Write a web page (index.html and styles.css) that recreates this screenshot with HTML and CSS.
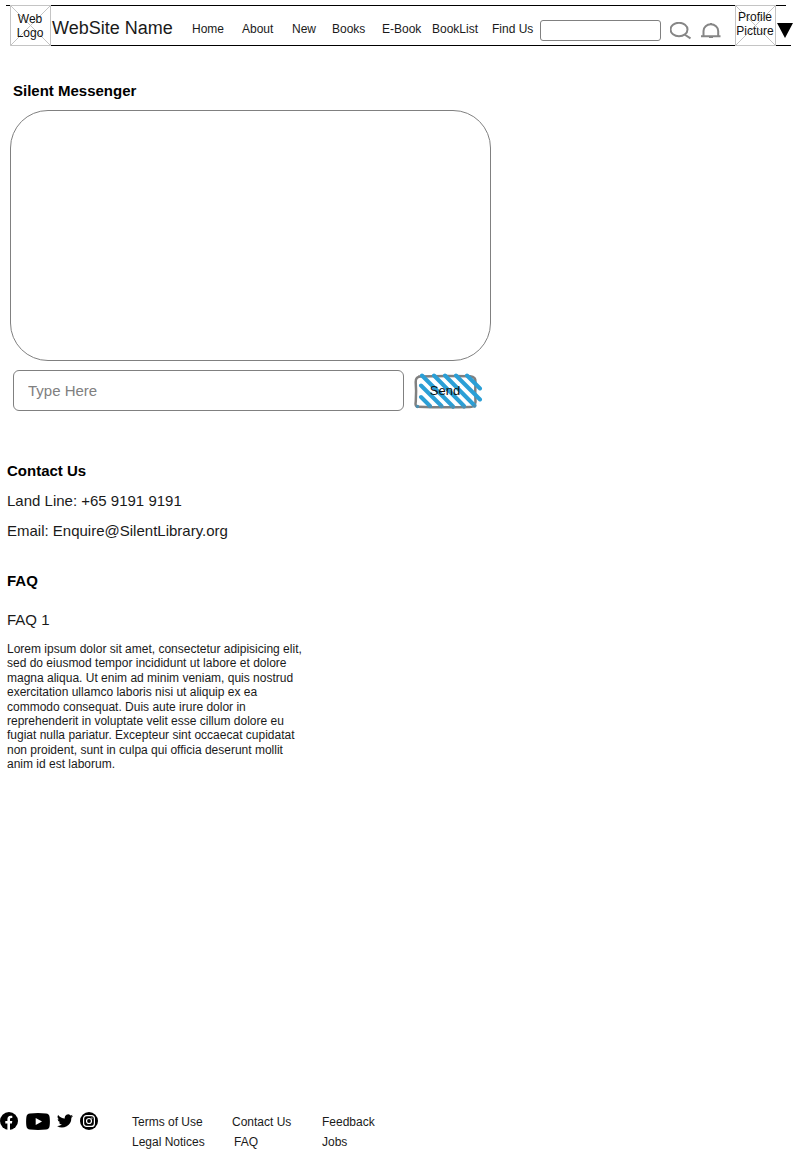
FILE: index.html
```html
<!DOCTYPE html>
<html lang="en">
<head>
<meta charset="utf-8">
<title>Silent Messenger</title>
<link rel="stylesheet" href="styles.css">
</head>
<body>
<header class="header">
  <div class="placeholder logo">
    <svg class="cross" viewBox="0 0 41 41"><path d="M.5.5h40v40H.5zL40.5 40.5M40.5.5L.5 40.5"/></svg>
    <span class="placeholder-text">Web<br>Logo</span>
  </div>
  <div class="brand">WebSite Name</div>
  <nav class="nav"><a>Home</a><a>About</a><a>New</a><a>Books</a><a>E-Book</a><a>BookList</a><a>Find Us</a></nav>
  <input class="search" aria-label="Search">
  <svg class="icon search-icon" viewBox="0 0 22 18"><ellipse cx="9" cy="7.500" rx="8.500" ry="6.700"/><path d="M14.500 12.500L20.500 16.300"/></svg>
  <svg class="icon bell-icon" viewBox="0 0 20 18"><path d="M2.500 14V9C2.500 5 5.800 2.300 9.800 2.300S17.200 5 17.200 9v5M0 14.200h19.500"/><path class="bell-detail" d="M8 15.500h4M9 1.500h2"/></svg>
  <div class="placeholder profile">
    <svg class="cross" viewBox="0 0 41 41"><path d="M.5.5h40v40H.5zL40.5 40.5M40.5.5L.5 40.5"/></svg>
    <span class="placeholder-text">Profile<br>Picture</span>
  </div>
  <svg class="caret" viewBox="0 0 16 15"><path d="M0 0h16L8 15z"/></svg>
</header>
<main class="main">
  <h1 class="title chat-title">Silent Messenger</h1>
  <section class="chat"></section>
  <form class="compose">
    <input class="message" placeholder="Type Here" aria-label="Message">
    <button class="send" type="button">
      <svg class="sketch" viewBox="0 0 70 38">
        <path class="outline" d="M5 3.500Q30 2.600 56 3.300Q62 4 61.500 9Q61 19 61.500 29Q61 34 56 34Q30 34.800 4 33.800Q.8 34 1.800 28Q2.500 18 1.700 9Q1.500 3.500 7 3.400"/>
        <path class="hatch" d="M7 24l9 9M7 12.500l20.500 20.500M8 2.500l31 31M20 2.500L50 33M31 2.500L60.500 32.500M42 2.500L66 26.500M53 2.500L66 15.500"/>
        <path class="marks" d="M3.500 33.500h0M16 33.500h0M27.500 33.500h0M39 34h0M50 34h0M60.500 33h0"/>
      </svg>
      <span class="send-text">Send</span>
    </button>
  </form>
  <section class="contact">
    <h2 class="title">Contact Us</h2>
    <p class="line">Land Line: +65 9191 9191</p>
    <p class="line">Email: Enquire@SilentLibrary.org</p>
  </section>
  <section class="faq">
    <h2 class="title">FAQ</h2>
    <h3 class="question">FAQ 1</h3>
    <p class="answer">Lorem ipsum dolor sit amet, consectetur adipisicing elit,<br>sed do eiusmod tempor incididunt ut labore et dolore<br>magna aliqua. Ut enim ad minim veniam, quis nostrud<br>exercitation ullamco laboris nisi ut aliquip ex ea<br>commodo consequat. Duis aute irure dolor in<br>reprehenderit in voluptate velit esse cillum dolore eu<br>fugiat nulla pariatur. Excepteur sint occaecat cupidatat<br>non proident, sunt in culpa qui officia deserunt mollit<br>anim id est laborum.</p>
  </section>
</main>
<footer class="footer">
  <div class="social">
    <svg class="facebook" viewBox="0 0 18 18"><circle cx="9" cy="9" r="9"/><path fill="#fff" d="M7.400 18v-6.400H5.300V9h2.100V7.200C7.400 5 8.600 3.800 10.600 3.800c.9 0 1.700.1 1.700.1v2h-1c-1 0-1.300.6-1.300 1.300V9h2.300l-.4 2.600H10V18z"/></svg>
    <svg class="youtube" viewBox="0 0 24 17"><path d="M4 .4Q12-.3 20 .4Q23.200.6 23.600 4Q24.200 8.500 23.600 13Q23.200 16.300 20 16.600Q12 17.300 4 16.600Q.8 16.300.4 13Q-.2 8.500.4 4Q.8.600 4 .4z"/><path fill="#fff" d="M9.700 5l6.300 3.500L9.700 12z"/></svg>
    <svg class="twitter" viewBox="0 0 24 20"><path d="M24 2.400a10 10 0 0 1-2.800.8A5 5 0 0 0 23.300.5a10 10 0 0 1-3.100 1.200A4.900 4.900 0 0 0 11.800 6.200 14 14 0 0 1 1.700 1a4.900 4.900 0 0 0 1.500 6.600A5 5 0 0 1 1 7v.1a4.900 4.900 0 0 0 3.900 4.800 5 5 0 0 1-2.200.1 4.900 4.900 0 0 0 4.600 3.400A9.900 9.900 0 0 1 0 17.500a14 14 0 0 0 21.500-12.400A10 10 0 0 0 24 2.400z"/></svg>
    <svg class="instagram" viewBox="0 0 18 18"><circle cx="9" cy="9" r="9"/><g fill="none" stroke="#fff" stroke-width="1.200"><rect x="3.600" y="3.600" width="10.800" height="10.800" rx="3"/><circle cx="9" cy="9" r="2.500"/></g><circle cx="11.900" cy="6.100" r=".7" fill="#fff"/></svg>
  </div>
  <div class="links"><a>Terms of Use</a><a>Contact Us</a><a>Feedback</a><a>Legal Notices</a><a class="faq-link">FAQ</a><a>Jobs</a></div>
</footer>
</body>
</html>
```
FILE: styles.css
```css
* { box-sizing: border-box; }
body {
  margin: 0;
  min-height: 1155px;
  padding-top: 5px;
  display: flex;
  flex-direction: column;
  background: #fff;
  color: #1a1a1a;
  font: 12px/14px "Liberation Sans", Arial, sans-serif;
}
svg { display: block; }
h1, h2, h3, p { margin: 0; }
.header {
  height: 41px;
  padding-left: 10px;
  display: flex;
  align-items: flex-start;
  background:
    linear-gradient(#000, #000) 6px 0 / 780px 1px no-repeat,
    linear-gradient(#000, #000) 10px 40px / 781px 1px no-repeat;
}
.placeholder { position: relative; flex: none; width: 41px; height: 41px; text-align: center; background: #fff; }
.cross { position: absolute; inset: 0; width: 41px; height: 41px; fill: none; stroke: #c4c4c4; }
.placeholder-text { position: relative; display: block; width: 40px; color: #111; white-space: nowrap; }
.logo .placeholder-text { padding-top: 7px; }
.profile .placeholder-text { padding-top: 5px; }
.brand { width: 141px; padding: 13px 0 0 1px; font-size: 18px; line-height: 21px; white-space: nowrap; }
.nav { display: grid; grid-template-columns: 50px 50px 40px 50px 50px 60px 48px; padding-top: 17px; white-space: nowrap; }
.search { width: 121px; height: 21px; margin-top: 15px; padding: 0 4px; border: 1px solid #808080; border-radius: 3px; background: #fff; }
.icon { flex: none; fill: none; stroke: #868686; stroke-width: 2; }
.search-icon { width: 22px; height: 18px; margin: 17px 0 0 9px; }
.bell-icon { width: 20px; height: 18px; margin: 17px 14px 0 9px; }
.bell-detail { stroke-width: 1; }
.caret { flex: none; width: 16px; height: 15px; margin: 18px 0 0 1px; }
.main { flex: 1; padding: 36px 0 0 7px; }
.title { font-size: 15px; line-height: 18px; color: #000; }
.chat-title { padding-left: 6px; }
.chat { width: 481px; height: 251px; margin: 10px 0 0 3px; border: 1px solid #808080; border-radius: 38px; }
.compose { display: flex; gap: 10px; margin: 9px 0 0 6px; }
.message { width: 391px; height: 41px; padding: 0 14px; border: 1px solid #808080; border-radius: 6px; font: 15px "Liberation Sans", Arial, sans-serif; }
.message::placeholder { color: #808080; opacity: 1; }
.send { position: relative; width: 70px; height: 38px; margin-top: 3px; padding: 0 8px 2px 0; border: 0; background: none; color: #111; font: 13px/14px "Liberation Sans", Arial, sans-serif; }
.sketch { position: absolute; inset: 0; width: 70px; height: 38px; fill: none; stroke-linecap: round; }
.hatch { stroke: #2b9fd6; stroke-width: 4; }
.outline { stroke: #808080; stroke-width: 2.5; }
.marks { stroke: #4d8fb0; stroke-width: 3.5; }
.send-text { position: relative; }
.contact { padding-top: 51px; }
.line { margin-top: 12px; font-size: 15px; line-height: 18px; }
.faq { padding-top: 32px; }
.question { margin-top: 21px; font-size: 15px; line-height: 18px; font-weight: 400; }
.answer { margin-top: 13px; line-height: 14.4px; white-space: nowrap; }
.footer { display: flex; height: 45px; }
.social { display: flex; width: 132px; padding-top: 2px; }
.facebook, .instagram { width: 18px; height: 18px; }
.youtube { width: 24px; height: 17px; margin: 1px 7px 0 8px; }
.twitter { width: 16px; height: 14px; margin: 2px 7px 0 0; }
.links { display: grid; grid-template-columns: 100px 90px 60px; grid-auto-rows: 20px; padding-top: 5px; white-space: nowrap; }
.faq-link { padding-left: 2px; }
```
